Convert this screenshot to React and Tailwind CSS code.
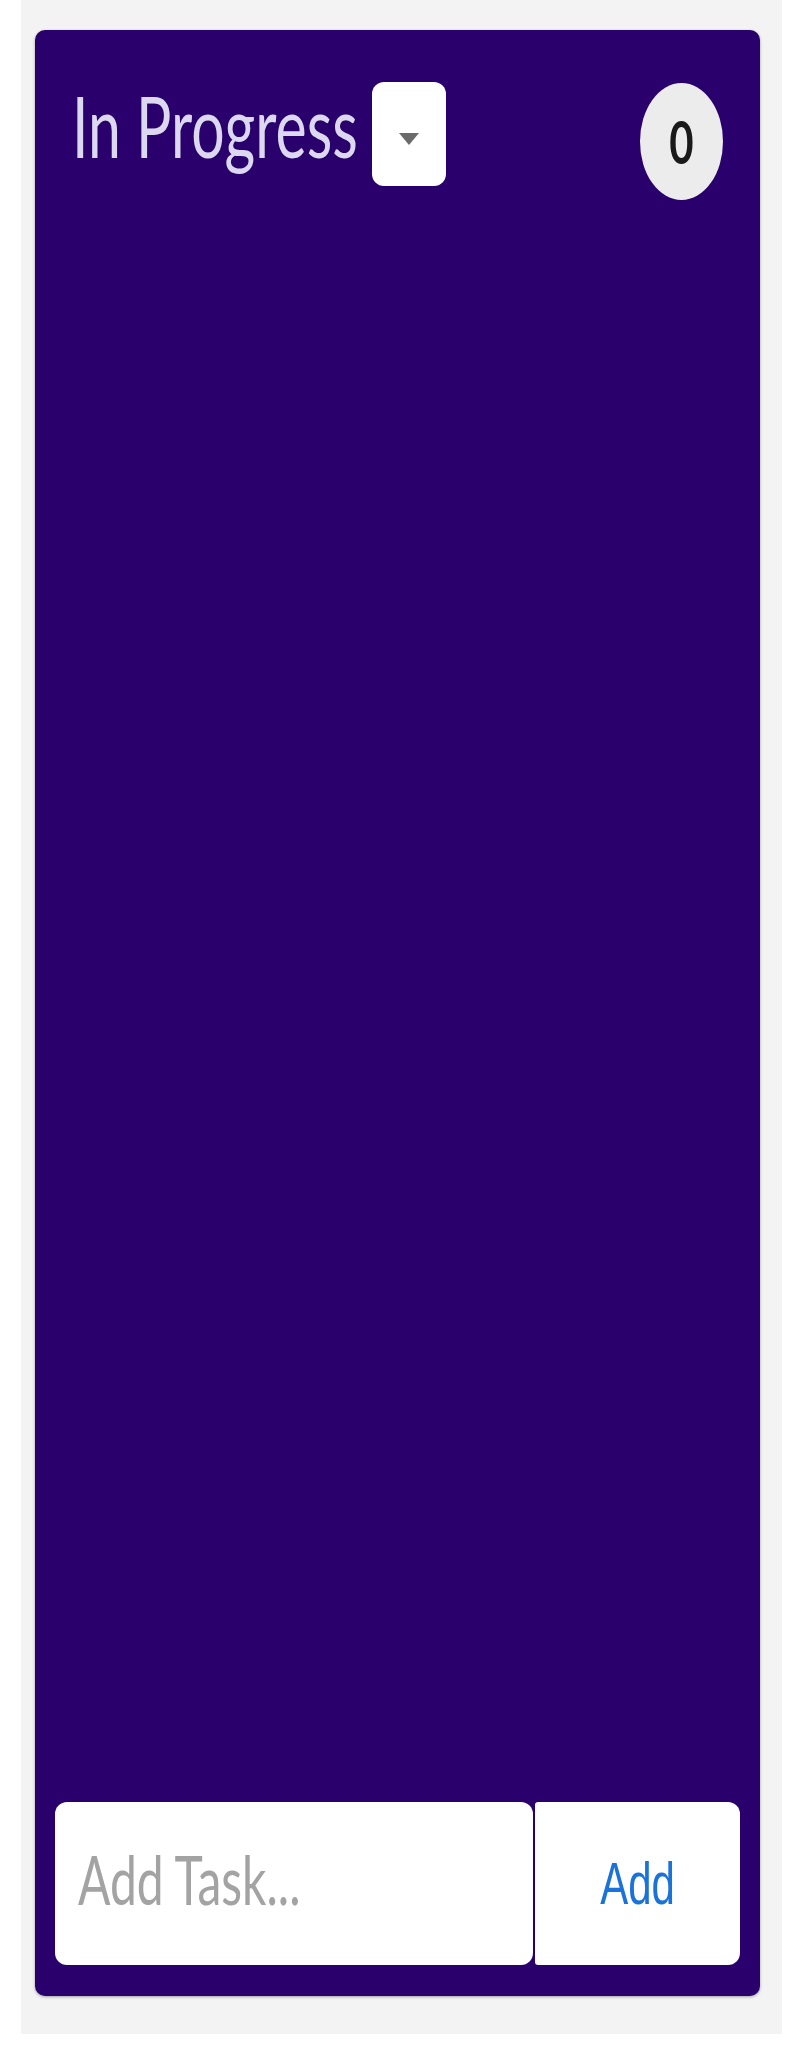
import { useState } from "react";

export default function App() {
  const [task, setTask] = useState("");
  const [tasks, setTasks] = useState([]);

  const handleAdd = () => {
    if (task.trim() === "") return;
    setTasks([...tasks, task.trim()]);
    setTask("");
  };

  return (
    <div className="min-h-screen bg-white">
      <div className="ml-[21px] w-[761px] h-[2034px] bg-[#f3f3f3] pt-[30px] px-[14px]">
        <section className="flex flex-col h-[1966px] w-[725px] rounded-[10px] bg-[#2a006c] shadow-[0_1px_3px_rgba(0,0,0,0.35)]">
          <header className="flex items-start justify-between pt-[52px] px-[37px]">
            <div className="flex items-start gap-[14px]">
              <h2 className="mt-[14px] inline-block scale-y-[1.45] text-[59px] leading-[60px] font-normal text-[#dcd8ef] font-['Lato',sans-serif]">
                In Progress
              </h2>
              <button className="flex items-center justify-center w-[74px] h-[104px] pt-[10px] rounded-[12px] bg-white">
                <svg width="22" height="14" viewBox="0 0 22 14">
                  <path d="M1 1 L21 1 L11 13 Z" fill="#6b6b6b" />
                </svg>
              </button>
            </div>
            <div className="mt-[1px] flex items-center justify-center w-[83px] h-[117px] rounded-[50%] bg-[#ececec]">
              <span className="inline-block scale-y-[1.4] text-[42px] leading-none font-bold text-[#1a1a1a] font-['Lato',sans-serif]">
                {tasks.length}
              </span>
            </div>
          </header>

          <div className="flex-1" />

          <div className="flex gap-[2px] px-[20px] pb-[31px]">
            <div className="flex items-center w-[478px] h-[163px] pl-[23px] pb-[8px] rounded-[12px] bg-white">
              <input
                value={task}
                onChange={(e) => setTask(e.target.value)}
                placeholder="Add Task..."
                className="w-full bg-transparent outline-none scale-y-[1.4] origin-left text-[48px] text-[#333] placeholder:text-[#a3a3a3] font-['Lato',sans-serif]"
              />
            </div>
            <button
              onClick={handleAdd}
              className="flex items-center justify-center w-[205px] h-[163px] rounded-r-[12px] rounded-l-[3px] bg-white"
            >
              <span className="inline-block scale-y-[1.4] text-[42px] leading-none text-[#1a73d9] font-['Liberation_Sans',Arial,sans-serif]">
                Add
              </span>
            </button>
          </div>
        </section>
      </div>
    </div>
  );
}
